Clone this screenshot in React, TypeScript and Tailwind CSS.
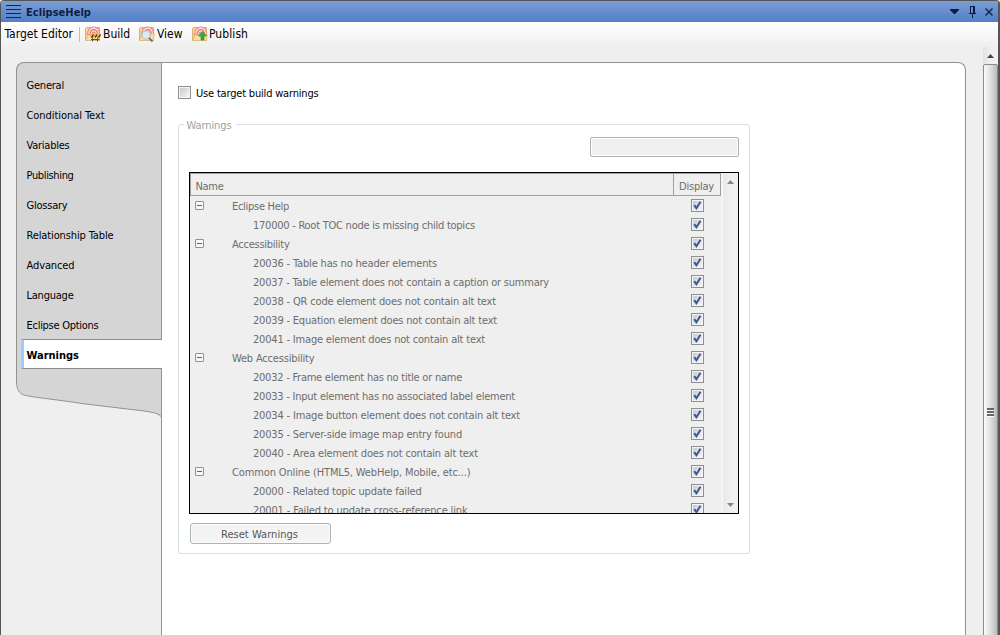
import { useLayoutEffect, useRef, useState } from 'react';
import type { ReactNode } from 'react';

type Row = { text: string; width: number; group?: boolean };

const tabs: [string, number][] = [
  ['General', 37.5],
  ['Conditional Text', 78],
  ['Variables', 43],
  ['Publishing', 47],
  ['Glossary', 41],
  ['Relationship Table', 87],
  ['Advanced', 48],
  ['Language', 47],
  ['Eclipse Options', 72],
  ['Warnings', 52.5],
];

const rows: Row[] = [
  { text: 'Eclipse Help', width: 57, group: true },
  { text: '170000 - Root TOC node is missing child topics', width: 222 },
  { text: 'Accessibility', width: 57.5, group: true },
  { text: '20036 - Table has no header elements', width: 184 },
  { text: '20037 - Table element does not contain a caption or summary', width: 296 },
  { text: '20038 - QR code element does not contain alt text', width: 243 },
  { text: '20039 - Equation element does not contain alt text', width: 244 },
  { text: '20041 - Image element does not contain alt text', width: 232 },
  { text: 'Web Accessibility', width: 82.5, group: true },
  { text: '20032 - Frame element has no title or name', width: 209 },
  { text: '20033 - Input element has no associated label element', width: 262 },
  { text: '20034 - Image button element does not contain alt text', width: 267 },
  { text: '20035 - Server-side image map entry found', width: 209 },
  { text: '20040 - Area element does not contain alt text', width: 225 },
  { text: 'Common Online (HTML5, WebHelp, Mobile, etc...)', width: 238.5, group: true },
  { text: '20000 - Related topic update failed', width: 168.5 },
  { text: '20001 - Failed to update cross-reference link', width: 214.5 },
];

/* Tracks a label so that it fills the width planned for it. */
function Label({ text, width, className = '' }: { text: string; width: number; className?: string }) {
  const ref = useRef<HTMLSpanElement>(null);
  const [spacing, setSpacing] = useState(0);
  useLayoutEffect(() => {
    if (ref.current) {
      setSpacing((width - ref.current.getBoundingClientRect().width) / text.length);
    }
  }, [text, width]);
  return (
    <span ref={ref} className={`inline-block shrink-0 whitespace-nowrap ${className}`} style={{ letterSpacing: spacing }}>
      {text}
    </span>
  );
}

function CheckBox({ checked = false }: { checked?: boolean }) {
  return (
    <span className="block size-[13px] shrink-0 border border-[#8e8f8f] bg-[#f4f4f4] p-px">
      <span className="block size-[9px] bg-linear-to-br from-[#c8ccd0] to-[#f6f6f6]">
        {checked && (
          <svg viewBox="0 0 9 9" className="size-[9px] overflow-visible">
            <path d="M1.2 4.2 3.4 7.2 7.5.8" fill="none" stroke="#3d5696" strokeWidth="2" />
          </svg>
        )}
      </span>
    </span>
  );
}

function TargetIcon({ children }: { children: ReactNode }) {
  return (
    <svg viewBox="0 0 16 16" className="size-4 shrink-0 overflow-visible">
      <path d="M.5 14.500V2.500L1.500 1.500h13v13z" fill="#f3d596" stroke="#d9b36a" />
      <path d="M2.500 8.500C3 3.500 5.500 1 8.800 1s5.600 2.500 5.900 7.500z" fill="#fde4e2" stroke="#f08583" strokeWidth="1.100" />
      <path d="M5 8.500C5.300 5.200 6.600 3.700 8.700 3.700s3.500 1.500 3.800 4.800M7.200 8.500c.1-1.700.6-2.500 1.500-2.500s1.500.8 1.600 2.500" fill="none" stroke="#ee6f6e" strokeWidth="1.200" />
      <path d="M.5 14.500 3.200 9h2.600l1.500-1.200h7.900l-.7 6.700z" fill="#f8dfa6" stroke="#dcb977" strokeWidth=".8" />
      {children}
    </svg>
  );
}

function SidebarTail() {
  return (
    <svg width="146" height="41" viewBox="0 0 146 41" className="block">
      <path d="M.5 0v3C.7 10 3 14.500 8 16c8 2.300 30 4.200 60 8.800l60 7.200c8 1.200 17 2.500 17.500 7V0z" fill="#d5d5d5" />
      <path d="M.5 0v3C.7 10 3 14.500 8 16c8 2.300 30 4.200 60 8.800l60 7.200c8 1.200 17 2.500 17.500 7" fill="none" stroke="#929292" />
    </svg>
  );
}

function Sidebar() {
  return (
    <nav className="w-[145px] shrink-0">
      <div className="h-[317px] rounded-tl-[8px] border-t border-l border-[#929292] bg-[#d5d5d5] pt-[6px]">
        {tabs.map(([name, width]) =>
          name === 'Warnings' ? (
            <div
              key={name}
              className="relative -mr-px ml-[4px] flex h-[30px] items-center rounded-l-[2px] border-y border-[#8b8b8b] bg-white font-bold"
            >
              <span className="mr-[2.500px] h-[28px] w-[3px] shrink-0 rounded-l-[2px] bg-[#99ccff]" />
              <Label text={name} width={width} className="pt-[3px]" />
            </div>
          ) : (
            <div key={name} className="flex h-[30px] items-center pt-[4px] pl-[9.500px]">
              <Label text={name} width={width} />
            </div>
          ),
        )}
      </div>
      <SidebarTail />
    </nav>
  );
}

function WarningTable() {
  return (
    <div className="flex h-[342px] w-[550px] border border-black bg-[#efefef] text-[#6d6d6d]">
      <div className="flex w-[531px] flex-col overflow-hidden">
        <div className="flex h-[23px] shrink-0 border border-[#a0a0a0]">
          <div className="flex w-[482px] items-center pt-[4px] pl-[4.500px]">
            <Label text="Name" width={28} />
          </div>
          <div className="flex grow items-center border-l border-[#a0a0a0] pt-[4px] pl-[5px]">
            <Label text="Display" width={35} />
          </div>
        </div>
        {rows.map((row) => (
          <div key={row.text} className="flex h-[19px] shrink-0 items-center">
            <div className="flex w-[501px] items-center pl-[5px]">
              <span className={row.group ? 'mr-[28px] flex size-[9px] items-center justify-center rounded-[1px] border border-[#929292] bg-[#f8f8f8]' : 'mr-[49px] size-[9px]'}>
                {row.group && <span className="h-px w-[5px] bg-[#4b63a7]" />}
              </span>
              <Label text={row.text} width={row.width} className="pt-[3px]" />
            </div>
            <CheckBox checked />
          </div>
        ))}
      </div>
      <div className="ml-px flex grow flex-col items-center justify-between border-l border-[#fafafa] bg-linear-to-r from-[#e9e9e9] via-[#f0f0f0] to-[#f2f2f2] pt-[7px] pb-[6px]">
        <svg width="7" height="4"><path d="M0 4 3.500 0 7 4z" fill="#858585" /></svg>
        <svg width="7" height="4"><path d="M0 0h7L3.500 4z" fill="#858585" /></svg>
      </div>
    </div>
  );
}

function Content() {
  return (
    <main className="w-[805px] shrink-0 rounded-tr-[8px] border-t border-r border-l border-[#929292] bg-white pt-[23px] pl-[16px]">
      <div className="flex h-[13px] items-center">
        <CheckBox />
        <Label text="Use target build warnings" width={122.5} className="mt-[3px] ml-[5px]" />
      </div>
      <section className="mt-[25px] h-[430px] w-[572px] rounded-[3px] border border-[#d5dfe5]">
        <div className="-mt-[7px] ml-[5px] flex h-[15px] w-[52px] items-center bg-white pl-[2.500px] text-[#a0a0a0]">
          <Label text="Warnings" width={45} />
        </div>
        <div className="mt-[4px] ml-[411px] h-[20px] w-[149px] rounded-[2px] border border-[#afafaf] bg-[#f0f0f0] shadow-[inset_0_0_0_1px_#fff]" />
        <div className="mt-[15px] ml-[10px]">
          <WarningTable />
        </div>
        <div className="mt-[9px] ml-[11px] flex h-[21px] w-[141px] items-center justify-center rounded-[3px] border border-[#adb2b5] bg-[#f4f4f4] pr-[2px] text-[#555] shadow-[inset_0_0_0_1px_#fcfcfc]">
          <Label text="Reset Warnings" width={77} className="pt-[3px]" />
        </div>
      </section>
    </main>
  );
}

function ScrollBar() {
  return (
    <div className="ml-auto flex w-[15px] flex-col items-center bg-linear-to-r from-[#e2e2e2] via-[#efefef] to-[#f1f1f1] pt-[7px]">
      <svg width="7" height="4" className="mb-[6px] shrink-0"><path d="M0 4 3.500 0 7 4z" fill="#444" /></svg>
      <div className="flex h-[696px] w-[15px] shrink-0 items-center justify-center rounded-[2px] border border-[#8b8b8b] bg-linear-to-r from-[#fafafa] via-[#dedfe0] to-[#b9babd]">
        <div className="flex flex-col">
          {[0, 1, 2].map((i) => (
            <span key={i} className="h-[3px] w-[7px] border-b border-white bg-[#666]" />
          ))}
        </div>
      </div>
    </div>
  );
}

export default function App() {
  return (
    <div className="flex h-[635px] w-[1000px] flex-col overflow-hidden rounded-t-[4px] border-t border-r-2 border-l border-[#555] bg-[#efefef] font-['DejaVu_Sans_Condensed','DejaVu_Sans',sans-serif] text-[11px] leading-[14px] text-black">
      <header className="flex h-[21px] shrink-0 items-center bg-linear-to-b from-[#7b9dd5] to-[#527fc7] text-[#0c1f47]">
        <svg width="15" height="14" className="-mt-px ml-[5px] shrink-0" shapeRendering="crispEdges">
          <path d="M0 1.500h15M0 5.500h15M0 9.500h15M0 13.500h15" stroke="#10264f" />
        </svg>
        <Label text="EclipseHelp" width={65} className="mt-[2px] ml-[5px] font-bold" />
        <div className="mr-[5px] ml-auto flex items-center">
          <svg width="9" height="5" className="mr-[9px]"><path d="M0 0h9v1L5 5H4L0 1z" fill="#0a1c42" /></svg>
          <svg width="9" height="12" className="mr-[8px]" shapeRendering="crispEdges">
            <path d="M2.500 0v7M2 .5h5M5.500 0v7M6.500 0v7M1 7.500h7M4.500 8v4" fill="none" stroke="#0a1c42" />
          </svg>
          <svg width="8" height="8"><path d="M.5.5l7 7M7.500.5l-7 7" stroke="#142b58" strokeWidth="1.500" /></svg>
        </div>
      </header>
      <div className="flex h-[25px] shrink-0 items-center bg-linear-to-b from-white to-[#efefef] pb-px pl-[3.500px] text-[12px]">
        <Label text="Target Editor" width={68.5} />
        <span className="mr-[5px] ml-[6px] h-[15px] w-px bg-[#bdbdbd]" />
        <TargetIcon>
          <path d="M7.500 9v6.500M12.500 9v6.500M6 13.500h8.500" stroke="#555" />
          <path d="M5.500 8.500h10v3h-10z" fill="#e8bd30" />
          <path d="m6.500 11.500 2-3m1.500 3 2-3m1.500 3 2-3" stroke="#2b2820" strokeWidth="1.300" />
        </TargetIcon>
        <Label text="Build" width={27} className="ml-[2px]" />
        <span className="w-[9px]" />
        <TargetIcon>
          <circle cx="7" cy="9" r="4.200" fill="#dce9f5" fillOpacity=".95" stroke="#a9bdd0" />
          <path d="m10 12 3.500 3.500" stroke="#71777e" strokeWidth="2" />
        </TargetIcon>
        <Label text="View" width={25.5} className="ml-[2px]" />
        <span className="w-[9px]" />
        <TargetIcon>
          <path d="M10.500 5.500 14.500 10H12v4H9v-4H6.500z" fill="#22b83c" stroke="#168a2c" strokeWidth=".6" />
        </TargetIcon>
        <Label text="Publish" width={39} className="ml-[1.500px]" />
      </div>
      <div className="flex min-h-0 grow">
        <div className="flex pt-[15px] pl-[15px]">
          <Sidebar />
          <Content />
        </div>
        <ScrollBar />
      </div>
    </div>
  );
}
